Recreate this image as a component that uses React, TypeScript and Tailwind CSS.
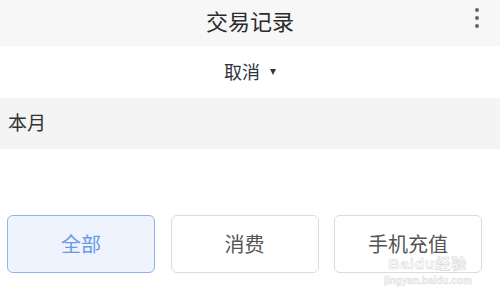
import React from "react";

export default function App() {
  const font = { fontFamily: '"Noto Sans CJK SC", "Noto Sans", sans-serif' };
  return (
    <div className="relative w-[500px] h-[295px] bg-white overflow-hidden" style={font}>
      <div className="relative h-[46px] bg-[#f7f7f7] flex items-center justify-center pb-[7px]">
        <span className="text-[22px] leading-none text-[#2b2b2b]">交易记录</span>
        <div className="absolute right-[21px] top-[8px] flex flex-col gap-[4px]">
          <span className="w-[4px] h-[4px] rounded-full bg-[#666]" />
          <span className="w-[4px] h-[4px] rounded-full bg-[#666]" />
          <span className="w-[4px] h-[4px] rounded-full bg-[#666]" />
        </div>
      </div>
      <div className="h-[52px] flex items-center justify-center gap-[10px] pb-[3px]">
        <span className="text-[18px] leading-none text-[#2f3540]">取消</span>
        <span className="w-0 h-0 border-l-[3.5px] border-r-[3.5px] border-t-[6px] border-l-transparent border-r-transparent border-t-[#2f3540] mt-[2px]" />
      </div>
      <div className="h-[51px] bg-[#f4f4f4] flex items-center pl-[8px] pb-[4px]">
        <span className="text-[19px] leading-none text-[#333]">本月</span>
      </div>
      <div className="pt-[66px] pl-[7px] flex gap-[15.5px]">
        <div className="w-[148px] h-[58px] rounded-[6px] border border-[#8fb3ee] bg-[#eef3fd] flex items-center justify-center">
          <span className="text-[20px] leading-none text-[#6a9ae6]">全部</span>
        </div>
        <div className="w-[148px] h-[58px] rounded-[6px] border border-[#dcdcdc] bg-white flex items-center justify-center">
          <span className="text-[20px] leading-none text-[#555]">消费</span>
        </div>
        <div className="w-[148px] h-[58px] rounded-[6px] border border-[#dcdcdc] bg-white flex items-center justify-center">
          <span className="text-[20px] leading-none text-[#555]">手机充值</span>
        </div>
      </div>
      <div className="absolute left-[384px] top-[256px] flex flex-col items-center pointer-events-none">
        <span
          className="text-[15px] leading-none font-bold text-white tracking-[1px]"
          style={{ fontFamily: '"Liberation Sans", "Noto Sans CJK SC", sans-serif', WebkitTextStroke: "0.6px #d8d8d8" }}
        >
          Baidu经验
        </span>
        <span
          className="text-[10px] leading-none font-bold text-[#f0f0f0] mt-[5px]"
          style={{ fontFamily: '"Liberation Sans", sans-serif', WebkitTextStroke: "0.4px #dedede" }}
        >
          jingyan.baidu.com
        </span>
      </div>
    </div>
  );
}
